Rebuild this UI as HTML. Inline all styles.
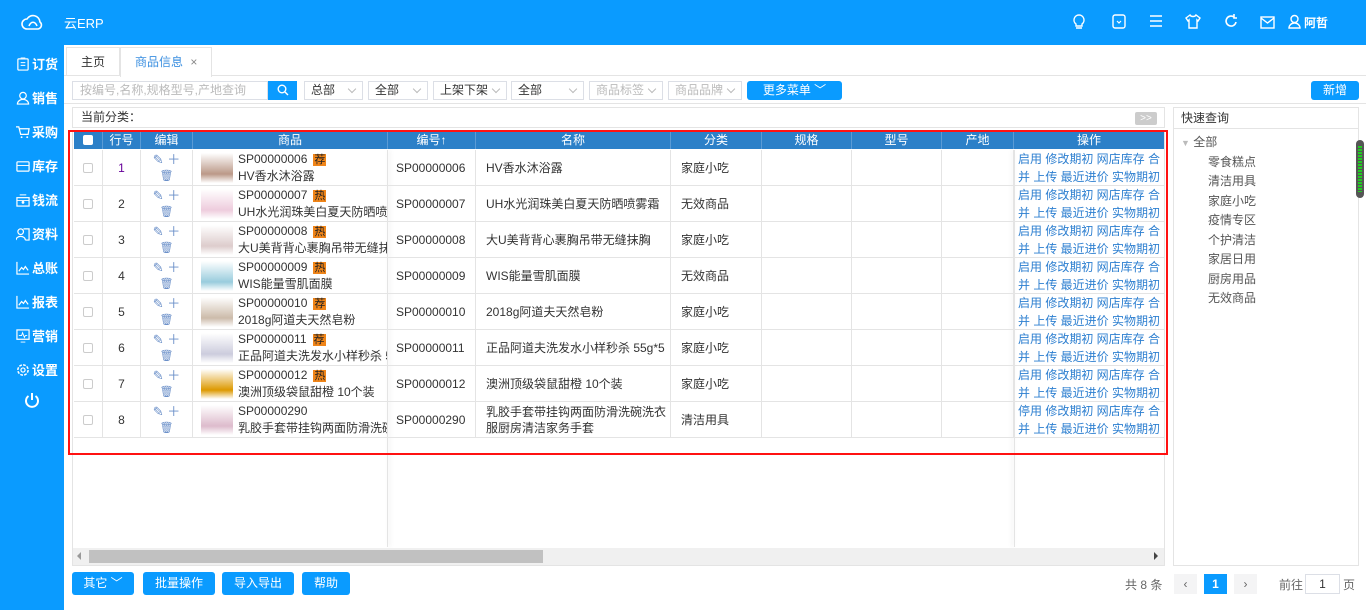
<!DOCTYPE html>
<html><head><meta charset="utf-8"><style>
*{box-sizing:border-box;margin:0;padding:0}
body{width:1366px;height:610px;overflow:hidden;background:#fff;font:12px "Liberation Sans","Noto Sans CJK SC",sans-serif;color:#333;position:relative}
.a{position:absolute}
.top{left:0;top:0;width:1366px;height:45px;background:#0a9bff}
.side{left:0;top:45px;width:64px;height:565px;background:#0a9bff}
.nav{position:absolute;left:16px;color:#fff;font-size:13px;font-weight:bold;display:flex;align-items:center;gap:2px}
.nav svg{width:14px;height:14px}
.tic{position:absolute;top:14px}
.sel{position:absolute;top:81px;height:19px;border:1px solid #dcdfe6;font-size:12px;line-height:17px;padding-left:6px;background:#fff}
.sel:after{content:"";position:absolute;right:7px;top:4px;width:5px;height:5px;border-right:1px solid #bbb;border-bottom:1px solid #bbb;transform:rotate(45deg)}
.btn{position:absolute;background:#0a9bff;color:#fff;border-radius:3px;text-align:center;font-size:12px}
.hd{position:absolute;top:132px;height:17px;background:#2c80c8;color:#fff;text-align:center;line-height:17px;font-size:12px;border-right:1px solid #5b9bd5}
.row{position:absolute;left:74px;width:1090px;height:36px;border-bottom:1px solid #e4e4e4}
.c{position:absolute;top:0;height:35px;border-right:1px solid #e4e4e4;display:flex;align-items:center}
.cb{width:10px;height:10px;border:1px solid #ccc;border-radius:2px;background:#fff}
.badge{background:#f08519;color:#222;padding:0 1px;margin-left:6px;font-size:11px;line-height:13px}
.op{color:#2d7fd0;line-height:18px;font-size:12px;padding-left:4px;white-space:nowrap}
.tree{position:absolute;left:1208px;color:#555;font-size:12px}
</style></head><body>
<div class="a top">
 <svg class="a" style="left:20px;top:13px" width="24" height="18" viewBox="0 0 24 18"><path d="M7 16a5 5 0 0 1 0-10a7 7 0 0 1 13 3a4 4 0 0 1-2 7z M9 13c2-5 6-5 8 0" fill="none" stroke="#fff" stroke-width="1.6"/></svg>
 <div class="a" style="left:64px;top:13px;color:#fff;font-size:13px">云ERP</div>
 <svg class="tic" style="left:1072px" width="14" height="16" viewBox="0 0 14 16"><path d="M7 1a5 5 0 0 1 3 9v2H4v-2A5 5 0 0 1 7 1zM4 14h6" fill="none" stroke="#fff" stroke-width="1.4"/></svg>
 <svg class="tic" style="left:1112px" width="14" height="15" viewBox="0 0 14 15"><rect x="1" y="1" width="12" height="13" rx="2" fill="none" stroke="#fff" stroke-width="1.4"/><path d="M5 7l2 2 2-2" fill="none" stroke="#fff" stroke-width="1.2"/></svg>
 <svg class="tic" style="left:1149px" width="14" height="14" viewBox="0 0 14 14"><path d="M1 2h12M1 7h12M1 12h12" stroke="#fff" stroke-width="1.6"/></svg>
 <svg class="tic" style="left:1185px" width="16" height="15" viewBox="0 0 16 15"><path d="M5 1L1 4l2 3 1-1v8h8V6l1 1 2-3-4-3c-1 2-5 2-6 0z" fill="none" stroke="#fff" stroke-width="1.4"/></svg>
 <svg class="tic" style="left:1224px" width="14" height="15" viewBox="0 0 14 15"><path d="M12 8a5 5 0 1 1-2-5M10 0v4h3" fill="none" stroke="#fff" stroke-width="1.6"/></svg>
 <svg class="tic" style="left:1260px;top:16px" width="15" height="13" viewBox="0 0 15 13"><rect x="1" y="1" width="13" height="11" fill="none" stroke="#fff" stroke-width="1.4"/><path d="M1 2l6.5 5L14 2" fill="none" stroke="#fff" stroke-width="1.4"/></svg>
 <svg class="tic" style="left:1288px" width="13" height="15" viewBox="0 0 13 15"><circle cx="6.5" cy="5" r="3.5" fill="none" stroke="#fff" stroke-width="1.4"/><path d="M1 14a5.5 5 0 0 1 11 0z" fill="none" stroke="#fff" stroke-width="1.4"/></svg>
 <div class="a" style="left:1304px;top:14px;color:#fff;font-weight:bold;font-size:12px">阿哲</div>
</div>
<div class="a side">
 <div class="nav" style="top:9px"><svg viewBox="0 0 15 15"><rect x="2" y="2" width="11" height="12" rx="1" fill="none" stroke="#fff" stroke-width="1.3"/><path d="M5 6h5M5 9h5M5 1h5" stroke="#fff"/></svg>订货</div>
 <div class="nav" style="top:43px"><svg viewBox="0 0 15 15"><circle cx="7.5" cy="5" r="3.5" fill="none" stroke="#fff" stroke-width="1.3"/><path d="M1.5 14a6 5 0 0 1 12 0z" fill="none" stroke="#fff" stroke-width="1.3"/></svg>销售</div>
 <div class="nav" style="top:77px"><svg viewBox="0 0 15 15"><path d="M0 2h3l2 8h8l1-6H4" fill="none" stroke="#fff" stroke-width="1.3"/><circle cx="6" cy="13" r="1" fill="#fff"/><circle cx="12" cy="13" r="1" fill="#fff"/></svg>采购</div>
 <div class="nav" style="top:111px"><svg viewBox="0 0 15 15"><rect x="1" y="3" width="13" height="10" rx="1" fill="none" stroke="#fff" stroke-width="1.3"/><path d="M1 7h13" stroke="#fff"/></svg>库存</div>
 <div class="nav" style="top:145px"><svg viewBox="0 0 15 15"><rect x="1" y="5" width="13" height="9" fill="none" stroke="#fff" stroke-width="1.3"/><path d="M4 2h7M1 8h13" stroke="#fff"/><circle cx="7.5" cy="10" r="1.5" fill="#fff"/></svg>钱流</div>
 <div class="nav" style="top:179px"><svg viewBox="0 0 15 15"><circle cx="5" cy="5" r="3" fill="none" stroke="#fff" stroke-width="1.3"/><path d="M0 14a5 4 0 0 1 10 0M8 2h6v12h-4" fill="none" stroke="#fff" stroke-width="1.3"/></svg>资料</div>
 <div class="nav" style="top:213px"><svg viewBox="0 0 15 15"><path d="M1 1v13h13M3 11l3-4 2 2 2-3 3 4" fill="none" stroke="#fff" stroke-width="1.3"/></svg>总账</div>
 <div class="nav" style="top:247px"><svg viewBox="0 0 15 15"><path d="M1 1v13h13M3 11l3-4 2 2 2-3 3 4" fill="none" stroke="#fff" stroke-width="1.3"/></svg>报表</div>
 <div class="nav" style="top:281px"><svg viewBox="0 0 15 15"><rect x="1" y="1" width="13" height="10" fill="none" stroke="#fff" stroke-width="1.3"/><path d="M3 7h3l1-3 2 5 1-2h2M5 14h5" fill="none" stroke="#fff"/></svg>营销</div>
 <div class="nav" style="top:315px"><svg viewBox="0 0 15 15"><circle cx="7.5" cy="7.5" r="5.5" fill="none" stroke="#fff" stroke-width="1.6" stroke-dasharray="3 1.3"/><circle cx="7.5" cy="7.5" r="2.2" fill="none" stroke="#fff" stroke-width="1.3"/></svg>设置</div>
 <svg class="a" style="left:24px;top:347px" width="16" height="16" viewBox="0 0 16 16"><path d="M4.5 4a6 6 0 1 0 7 0M8 1v7" fill="none" stroke="#fff" stroke-width="2"/></svg>
</div>
<!-- tabs -->
<div class="a" style="left:64px;top:45px;width:1302px;height:31px;border-bottom:1px solid #e4e4e4"></div>
<div class="a" style="left:66px;top:47px;width:54px;height:29px;border:1px solid #e4e4e4;border-bottom:none;line-height:28px;text-align:center;font-size:12px">主页</div>
<div class="a" style="left:120px;top:47px;width:92px;height:30px;border:1px solid #e4e4e4;border-bottom:none;background:#fff;line-height:28px;padding-left:14px;color:#3b8fe0;font-size:12px">商品信息 <span style="color:#888;margin-left:4px">×</span></div>
<!-- toolbar -->
<div class="a" style="left:72px;top:81px;width:196px;height:19px;border:1px solid #dcdfe6;color:#bbb;line-height:17px;padding-left:7px">按编号,名称,规格型号,产地查询</div>
<div class="a" style="left:268px;top:81px;width:29px;height:19px;background:#0a9bff"><svg style="margin:3px 0 0 9px" width="12" height="12" viewBox="0 0 12 12"><circle cx="5" cy="5" r="3.8" fill="none" stroke="#fff" stroke-width="1.4"/><path d="M8 8l3 3" stroke="#fff" stroke-width="1.4"/></svg></div>
<div class="sel" style="left:304px;width:59px">总部</div>
<div class="sel" style="left:368px;width:60px">全部</div>
<div class="sel" style="left:433px;width:74px">上架下架</div>
<div class="sel" style="left:511px;width:73px">全部</div>
<div class="sel" style="left:589px;width:74px;color:#bbb">商品标签</div>
<div class="sel" style="left:668px;width:74px;color:#bbb">商品品牌</div>
<div class="btn" style="left:747px;top:81px;width:95px;height:19px;line-height:19px">更多菜单 ﹀</div>
<div class="btn" style="left:1311px;top:81px;width:48px;height:19px;line-height:19px">新增</div>
<div class="a" style="left:64px;top:103px;width:1302px;height:1px;background:#e4e4e4"></div>
<!-- current category -->
<div class="a" style="left:72px;top:107px;width:1093px;height:21px;border:1px solid #e4e4e4;line-height:19px;padding-left:8px">当前分类：</div>
<div class="a" style="left:1135px;top:112px;width:22px;height:13px;background:#ccc;color:#fff;font-size:10px;line-height:13px;text-align:center;border-radius:2px">&gt;&gt;</div>
<!-- grid area -->
<div class="a" style="left:72px;top:130px;width:1093px;height:436px;border:1px solid #e4e4e4"></div>
<div class="a" style="left:387px;top:150px;width:1px;height:397px;background:#e4e4e4;box-shadow:2px 0 4px rgba(0,0,0,.12)"></div>
<div class="a" style="left:1014px;top:150px;width:1px;height:397px;background:#e4e4e4;box-shadow:-2px 0 4px rgba(0,0,0,.12)"></div>
<div class="hd" style="left:74px;width:29px"><span class="cb" style="display:inline-block;vertical-align:-1px;border-color:#fff"></span></div>
<div class="hd" style="left:103px;width:38px">行号</div>
<div class="hd" style="left:141px;width:52px">编辑</div>
<div class="hd" style="left:193px;width:195px">商品</div>
<div class="hd" style="left:388px;width:88px">编号↑</div>
<div class="hd" style="left:476px;width:195px">名称</div>
<div class="hd" style="left:671px;width:91px">分类</div>
<div class="hd" style="left:762px;width:90px">规格</div>
<div class="hd" style="left:852px;width:90px">型号</div>
<div class="hd" style="left:942px;width:72px">产地</div>
<div class="hd" style="left:1014px;width:150px;border:none">操作</div>
<div id="rows"></div>
<!-- scrollbar -->
<div class="a" style="left:73px;top:548px;width:1091px;height:17px;background:#f0f0f0"></div>
<div class="a" style="left:89px;top:550px;width:454px;height:13px;background:#c1c1c1"></div>
<div class="a" style="left:77px;top:552px;border:4px solid transparent;border-right:4px solid #999;border-left:none"></div>
<div class="a" style="left:1154px;top:552px;border:4px solid transparent;border-left:4px solid #444;border-right:none"></div>
<!-- bottom buttons -->
<div class="btn" style="left:72px;top:572px;width:62px;height:23px;line-height:23px">其它 ﹀</div>
<div class="btn" style="left:143px;top:572px;width:72px;height:23px;line-height:23px">批量操作</div>
<div class="btn" style="left:222px;top:572px;width:72px;height:23px;line-height:23px">导入导出</div>
<div class="btn" style="left:302px;top:572px;width:48px;height:23px;line-height:23px">帮助</div>
<div class="a" style="left:1125px;top:576px;color:#666;font-size:12px">共 8 条</div>
<div class="a" style="left:1174px;top:574px;width:23px;height:20px;background:#f4f4f5;color:#666;text-align:center;line-height:20px">‹</div>
<div class="a" style="left:1204px;top:574px;width:23px;height:20px;background:#0a9bff;color:#fff;font-weight:bold;text-align:center;line-height:20px">1</div>
<div class="a" style="left:1234px;top:574px;width:23px;height:20px;background:#f4f4f5;color:#666;text-align:center;line-height:20px">›</div>
<div class="a" style="left:1279px;top:576px;color:#666">前往</div>
<div class="a" style="left:1305px;top:574px;width:35px;height:20px;border:1px solid #dcdfe6;text-align:center;line-height:18px">1</div>
<div class="a" style="left:1343px;top:576px;color:#666">页</div>
<!-- right panel -->
<div class="a" style="left:1173px;top:107px;width:186px;height:459px;border:1px solid #e4e4e4"></div>
<div class="a" style="left:1173px;top:107px;width:186px;height:22px;border-bottom:1px solid #e4e4e4;line-height:22px;padding-left:8px">快速查询</div>
<div class="a" style="left:1356px;top:140px;width:8px;height:58px;background:#555;border-radius:4px"><div style="margin:6px 2px;height:46px;background:repeating-linear-gradient(#2c2 0 2px,#555 2px 3px)"></div></div>
<div class="a" style="left:1181px;top:133px;color:#555"><span style="color:#bbb;font-size:9px">▼</span> 全部</div>
<div class="tree" style="top:153px">零食糕点</div>
<div class="tree" style="top:172px">清洁用具</div>
<div class="tree" style="top:192px">家庭小吃</div>
<div class="tree" style="top:211px">疫情专区</div>
<div class="tree" style="top:231px">个护清洁</div>
<div class="tree" style="top:250px">家居日用</div>
<div class="tree" style="top:270px">厨房用品</div>
<div class="tree" style="top:289px">无效商品</div>
<!-- red outline -->
<div class="a" style="left:68px;top:130px;width:1100px;height:325px;border:2px solid #f11"></div>
<script>
var d=[["SP00000006","荐","HV香水沐浴露","HV香水沐浴露","家庭小吃","#b98","启用"],
["SP00000007","热","UH水光润珠美白夏天防晒喷雾霜","UH水光润珠美白夏天防晒喷雾霜","无效商品","#ecd","启用"],
["SP00000008","热","大U美背背心裹胸吊带无缝抹胸","大U美背背心裹胸吊带无缝抹胸","家庭小吃","#dcc","启用"],
["SP00000009","热","WIS能量雪肌面膜","WIS能量雪肌面膜","无效商品","#9cd","启用"],
["SP00000010","荐","2018g阿道夫天然皂粉","2018g阿道夫天然皂粉","家庭小吃","#cba","启用"],
["SP00000011","荐","正品阿道夫洗发水小样秒杀 55g*5","正品阿道夫洗发水小样秒杀 55g*5","家庭小吃","#ccd","启用"],
["SP00000012","热","澳洲顶级袋鼠甜橙 10个装","澳洲顶级袋鼠甜橙 10个装","家庭小吃","#d90","启用"],
["SP00000290","","乳胶手套带挂钩两面防滑洗碗洗衣服厨房清洁家务手套","乳胶手套带挂钩两面防滑洗碗洗衣<br>服厨房清洁家务手套","清洁用具","#dbc","停用"]];
var h="";
d.forEach(function(r,i){
var t=150+i*36;
h+='<div class="row" style="top:'+t+'px">'+
'<div class="c" style="left:0;width:29px;justify-content:center"><span class="cb"></span></div>'+
'<div class="c" style="left:29px;width:38px;justify-content:center;color:'+(i==0?'#609':'#333')+'">'+(i+1)+'</div>'+
'<div class="c" style="left:67px;width:52px;flex-direction:column;justify-content:center;color:#6a8fc8;font-size:13px;line-height:16px"><div>✎ ＋</div><div style="font-size:11px">🗑</div></div>'+
'<div class="c" style="left:119px;width:195px;overflow:hidden;white-space:nowrap"><div style="flex:0 0 32px;width:32px;height:30px;margin:0 0 0 8px;background:linear-gradient(#fff,'+r[5]+' 70%,#fff)"></div><div style="margin-left:5px;line-height:17px;flex:0 0 auto"><div>'+r[0]+(r[1]?'<span class="badge">'+r[1]+'</span>':'')+'</div><div>'+r[2]+'</div></div></div>'+
'<div class="c" style="left:314px;width:88px;padding-left:8px">'+r[0]+'</div>'+
'<div class="c" style="left:402px;width:195px;padding-left:10px;line-height:16px">'+r[3]+'</div>'+
'<div class="c" style="left:597px;width:91px;padding-left:10px">'+r[4]+'</div>'+
'<div class="c" style="left:688px;width:90px"></div><div class="c" style="left:778px;width:90px"></div><div class="c" style="left:868px;width:72px"></div>'+
'<div class="c" style="left:940px;width:150px;border:none;overflow:hidden"><div class="op">'+r[6]+' 修改期初 网店库存 合<br>并 上传 最近进价 实物期初</div></div>'+
'</div>';});
document.getElementById("rows").innerHTML=h;
</script>
</body></html>
